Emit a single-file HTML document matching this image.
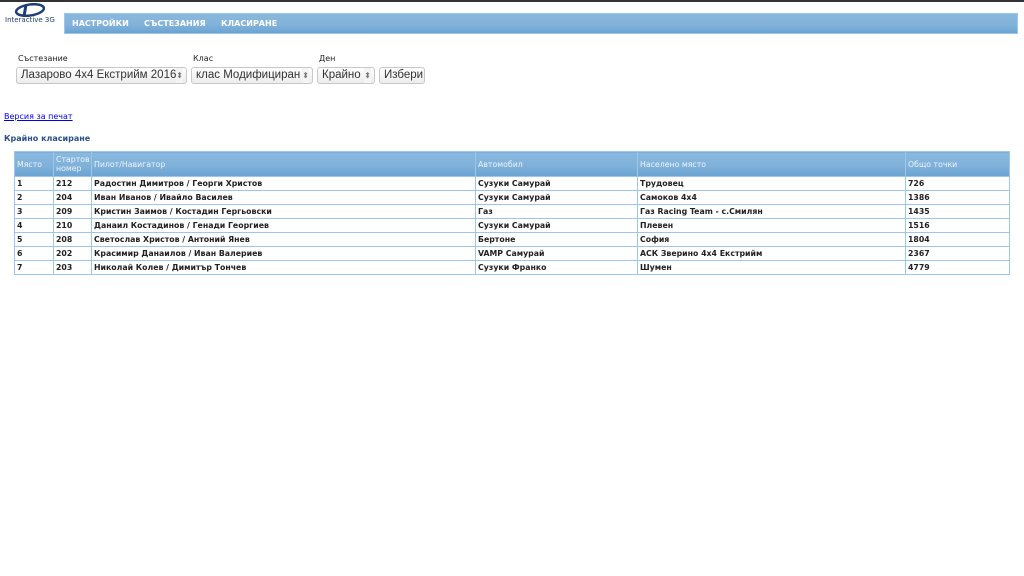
<!DOCTYPE html>
<html><head><meta charset="utf-8"><style>
body{margin:0;width:1024px;height:576px;background:#fff;font-family:"DejaVu Sans","Liberation Sans",sans-serif;position:relative;overflow:hidden}
.top{position:absolute;left:0;top:0;width:1024px;height:2px;background:#333}
.nav{position:absolute;left:64px;top:13px;width:954px;height:21px;background:linear-gradient(#8ab7de,#83b3da 55%,#6aa3d2);border:1px solid #9cc7ea;box-sizing:border-box}
.nav span{position:absolute;top:5px;color:#fff;font-weight:bold;font-size:8px}
.lbl{position:absolute;top:54px;font-size:8px;color:#222}
.sel{position:absolute;top:67px;height:17px;box-sizing:border-box;border:1px solid #c8c8c8;border-radius:3px;background:linear-gradient(#fff,#ececec);font-family:"Liberation Sans",sans-serif;font-size:11.5px;color:#333;line-height:15px;padding-left:4px;white-space:nowrap;overflow:hidden}
.sel i{position:absolute;right:3px;top:0;font-style:normal;font-size:8px;color:#777;background:#f4f4f4}
a{position:absolute;left:4px;top:112px;font-size:8px;color:#00e}
h4{position:absolute;left:4px;top:134px;margin:0;font-size:8px;color:#2a4f8a}
table{position:absolute;left:14px;top:151px;width:996px;border-collapse:collapse;font-size:7.8px;table-layout:fixed}
th{background:linear-gradient(#8bb9df,#7eb0d9 60%,#6aa3d2);color:#eef5fc;font-weight:normal;text-align:left;height:24px;padding:0 2px;border:1px solid #9cc7ea;line-height:9px;overflow:hidden}
td{height:13px;padding:0 2px;border:1px solid #9cc7ea;font-weight:bold;color:#222;line-height:13px;white-space:nowrap;overflow:hidden}
</style></head><body>
<div class="top"></div>
<svg style="position:absolute;left:12px;top:3px" width="34" height="14" viewBox="0 0 34 14"><ellipse cx="18" cy="7" rx="14" ry="5.5" fill="none" stroke="#1d3f75" stroke-width="2.5" transform="rotate(-8 18 7)"/><path d="M14 2 L12 13" stroke="#1d3f75" stroke-width="3"/></svg>
<div style="position:absolute;left:5px;top:16px;font-size:7px;color:#1d3f75">Interactive 3G</div>
<div class="nav"><span style="left:7px">НАСТРОЙКИ</span><span style="left:79px">СЪСТЕЗАНИЯ</span><span style="left:156px">КЛАСИРАНЕ</span></div>
<div class="lbl" style="left:18px">Състезание</div>
<div class="lbl" style="left:193px">Клас</div>
<div class="lbl" style="left:319px">Ден</div>
<div class="sel" style="left:16px;width:171px">Лазарово 4x4 Екстрийм 2016<i>⬍</i></div>
<div class="sel" style="left:191px;width:122px">клас Модифициран<i>⬍</i></div>
<div class="sel" style="left:317px;width:58px">Крайно<i>⬍</i></div>
<div class="sel" style="left:379px;width:46px">Избери</div>
<a href="#">Версия за печат</a>
<h4>Крайно класиране</h4>
<table>
<colgroup><col style="width:39px"><col style="width:38px"><col style="width:384px"><col style="width:162px"><col style="width:268px"><col></colgroup>
<tr><th>Място</th><th>Стартов номер</th><th>Пилот/Навигатор</th><th>Автомобил</th><th>Населено място</th><th>Общо точки</th></tr>
<tr><td>1</td><td>212</td><td>Радостин Димитров / Георги Христов</td><td>Сузуки Самурай</td><td>Трудовец</td><td>726</td></tr>
<tr><td>2</td><td>204</td><td>Иван Иванов / Ивайло Василев</td><td>Сузуки Самурай</td><td>Самоков 4x4</td><td>1386</td></tr>
<tr><td>3</td><td>209</td><td>Кристин Заимов / Костадин Гергьовски</td><td>Газ</td><td>Газ Racing Team - с.Смилян</td><td>1435</td></tr>
<tr><td>4</td><td>210</td><td>Данаил Костадинов / Генади Георгиев</td><td>Сузуки Самурай</td><td>Плевен</td><td>1516</td></tr>
<tr><td>5</td><td>208</td><td>Светослав Христов / Антоний Янев</td><td>Бертоне</td><td>София</td><td>1804</td></tr>
<tr><td>6</td><td>202</td><td>Красимир Данаилов / Иван Валериев</td><td>VAMP Самурай</td><td>АСК Зверино 4x4 Екстрийм</td><td>2367</td></tr>
<tr><td>7</td><td>203</td><td>Николай Колев / Димитър Тончев</td><td>Сузуки Франко</td><td>Шумен</td><td>4779</td></tr>
</table>
</body></html>
